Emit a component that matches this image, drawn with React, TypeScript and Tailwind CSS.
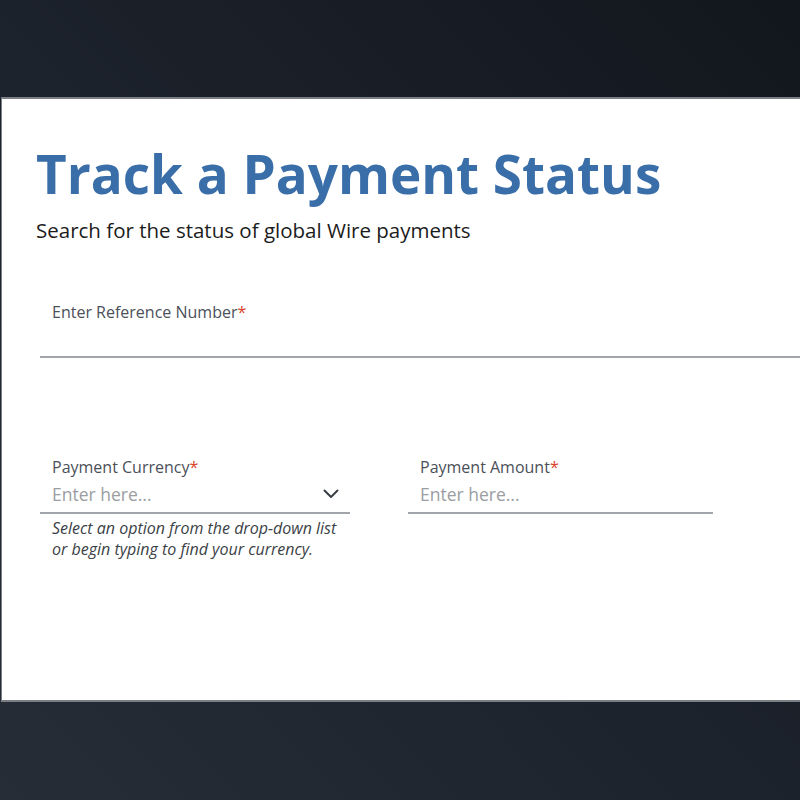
import React from 'react';

const font = { fontFamily: '"Open Sans", "Liberation Sans", sans-serif' };

const Req = () => <span className="text-[#d9432b]">*</span>;

const App: React.FC = () => {
  return (
    <div
      className="w-[800px] h-[800px] overflow-hidden bg-gradient-to-tr from-[#262d36] via-[#1c222b] to-[#12171e] pt-[97px]"
      style={font}
    >
      {/* Panel */}
      <div className="h-[605px] ml-px bg-white border-t-2 border-l border-b-2 border-[#7b7e82] pl-[34px] pt-[45px]">
        <h1 className="text-[53px] leading-[60px] font-bold text-[#3a6ea8]">
          Track a Payment Status
        </h1>
        <p className="mt-[13px] text-[20.5px] leading-[26px] text-[#1c1c1c]">
          Search for the status of global Wire payments
        </p>

        {/* Reference number */}
        <div className="mt-[59px] ml-[4px]">
          <label className="block pl-[12px] text-[16px] leading-[20px] text-[#4b5059]">
            Enter Reference Number<Req />
          </label>
          <div className="h-[34px]" />
          <div className="h-[2px] bg-[#a2a6ab]" />
        </div>

        {/* Currency + amount */}
        <div className="mt-[99px] ml-[4px] flex gap-[58px]">
          <div className="w-[310px]">
            <label className="block pl-[12px] text-[16px] leading-[20px] text-[#4b5059]">
              Payment Currency<Req />
            </label>
            <div className="flex items-center justify-between pl-[12px] pr-[11px] h-[35px]">
              <span className="text-[17.5px] text-[#9a9da2]">Enter here...</span>
              <svg width="16" height="10" viewBox="0 0 16 10" fill="none" className="-mt-[2px]">
                <path d="M1.5 1.5 L8 8 L14.5 1.5" stroke="#3a3f47" strokeWidth="2" strokeLinecap="round" strokeLinejoin="round" />
              </svg>
            </div>
            <div className="h-[2px] bg-[#a2a6ab]" />
            <p className="mt-[4px] pl-[12px] text-[16px] leading-[21px] italic text-[#3b3f46]">
              Select an option from the drop-down list
              <br />
              or begin typing to find your currency.
            </p>
          </div>

          <div className="w-[305px]">
            <label className="block pl-[12px] text-[16px] leading-[20px] text-[#4b5059]">
              Payment Amount<Req />
            </label>
            <div className="flex items-center pl-[12px] h-[35px]">
              <span className="text-[17.5px] text-[#9a9da2]">Enter here...</span>
            </div>
            <div className="h-[2px] bg-[#a2a6ab]" />
          </div>
        </div>
      </div>
    </div>
  );
};

export default App;
